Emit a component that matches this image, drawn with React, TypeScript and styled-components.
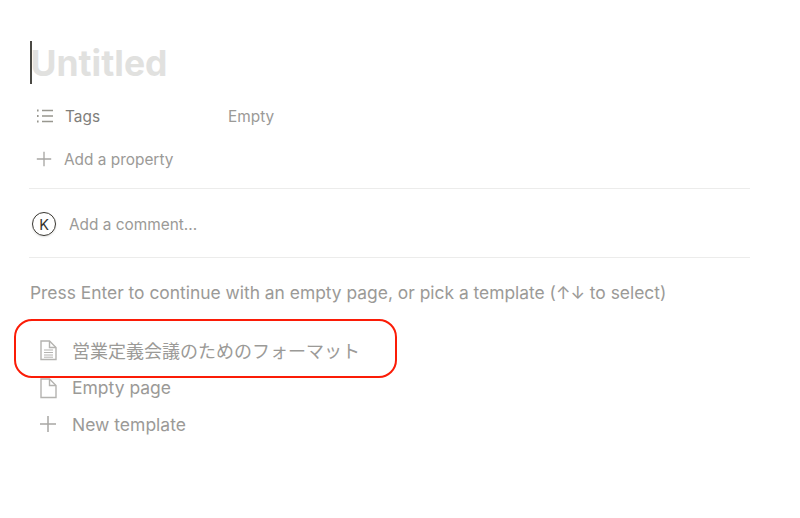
import React from 'react';
import styled, { createGlobalStyle } from 'styled-components';

const GlobalStyle = createGlobalStyle`
  html, body {
    margin: 0;
    padding: 0;
    background: #fff;
  }
  body {
    font-family: Inter, "Noto Sans CJK JP", sans-serif;
  }
`;

const Page = styled.div`
  width: 800px;
  height: 518px;
  overflow: hidden;
  padding: 40px 50px 0 29px;
  box-sizing: border-box;
`;

const TitleRow = styled.div`
  display: flex;
  align-items: center;
  height: 44px;
  padding-left: 1px;
`;

const Caret = styled.span`
  width: 1.5px;
  height: 43px;
  background: #4a4944;
`;

const Title = styled.h1`
  margin: 3px 0 0 -1px;
  font-size: 35.5px;
  font-weight: 700;
  line-height: 44px;
  letter-spacing: 0;
  color: #e1e1df;
`;

const PropertyRow = styled.div`
  display: flex;
  align-items: center;
  height: 24px;
  margin-top: ${p => p.$top}px;
  padding-left: 6px;
  font-size: 15.4px;
  color: ${p => p.$color};
`;

const PropertyName = styled.span`
  width: 163px;
  margin-left: 10px;
  color: #7f7e7a;
`;

const EmptyValue = styled.span`
  color: #9b9a97;
`;

const AddLabel = styled.span`
  margin-left: 11px;
`;

const Divider = styled.hr`
  margin: ${p => p.$top}px 0 0;
  border: 0;
  border-top: 1px solid #ececeb;
`;

const CommentRow = styled.div`
  display: flex;
  align-items: center;
  height: 24px;
  margin-top: 23px;
  padding-left: 3px;
  font-size: 15.4px;
  color: #9b9a97;
`;

const Avatar = styled.div`
  width: 24px;
  height: 24px;
  box-sizing: border-box;
  border: 1.3px solid #37352f;
  border-radius: 50%;
  display: flex;
  align-items: center;
  justify-content: center;
  font-size: 14.5px;
  color: #37352f;
  box-shadow: 0 1px 2px rgba(0, 0, 0, 0.12);
`;

const CommentLabel = styled.span`
  margin-left: 13px;
`;

const Hint = styled.p`
  margin: 23px 0 0 1px;
  font-size: 17.4px;
  line-height: 24px;
  color: #9b9a97;
`;

const TemplateList = styled.div`
  position: relative;
  margin-top: 26px;
  display: flex;
  flex-direction: column;
`;

const TemplateRow = styled.div`
  display: flex;
  align-items: center;
  height: ${p => p.$height}px;
  padding-left: 9px;
  font-size: 17.5px;
  color: #9b9a97;
`;

const TemplateLabel = styled.span`
  margin-left: 14px;
  font-size: ${p => p.$size || 17.5}px;
`;

const Highlight = styled.div`
  position: absolute;
  left: -15px;
  top: -12px;
  width: 383px;
  height: 59px;
  box-sizing: border-box;
  border: 2px solid #fb1c07;
  border-radius: 18px;
`;

const ListIcon = () => (
  <svg width="20" height="20" viewBox="0 0 20 20" fill="none" stroke="#98978f" strokeWidth="1.3">
    <path d="M7 4.5h11M7 10h11M7 15.5h11" />
    <path d="M2 4.5h1.6M2 10h1.6M2 15.5h1.6" strokeWidth="1.8" />
  </svg>
);

const PlusIcon = ({ size }: { size: number }) => (
  <svg width={size} height={size} viewBox="0 0 20 20" fill="none" stroke="#a8a7a4" strokeWidth="1.5">
    <path d="M10 2v16M2 10h16" />
  </svg>
);

const DocIcon = ({ lines }: { lines?: boolean }) => (
  <svg width="20" height="22" viewBox="0 0 20 22" fill="none" stroke="#b4b3b0" strokeWidth="1.4">
    <path d="M3 2h8.5L18 8.5V20.5H3z" />
    <path d="M11.5 2v6.5H18" />
    {lines && <path d="M6 11h9M6 13.5h9M6 16h9M6 18.2h9" strokeWidth="1" />}
  </svg>
);

const App = () => {
  return (
    <>
      <GlobalStyle />
      <Page>
        <TitleRow>
          <Caret />
          <Title>Untitled</Title>
        </TitleRow>
        <PropertyRow $top={20} $color="#74736f">
          <ListIcon />
          <PropertyName>Tags</PropertyName>
          <EmptyValue>Empty</EmptyValue>
        </PropertyRow>
        <PropertyRow $top={19} $color="#9b9a97">
          <PlusIcon size={18} />
          <AddLabel>Add a property</AddLabel>
        </PropertyRow>
        <Divider $top={17} />
        <CommentRow>
          <Avatar>K</Avatar>
          <CommentLabel>Add a comment...</CommentLabel>
        </CommentRow>
        <Divider $top={21} />
        <Hint>Press Enter to continue with an empty page, or pick a template (↑↓ to select)</Hint>
        <TemplateList>
          <Highlight />
          <TemplateRow $height={37}>
            <DocIcon lines />
            <TemplateLabel $size={18}>営業定義会議のためのフォーマット</TemplateLabel>
          </TemplateRow>
          <TemplateRow $height={39}>
            <DocIcon />
            <TemplateLabel>Empty page</TemplateLabel>
          </TemplateRow>
          <TemplateRow $height={34}>
            <PlusIcon size={20} />
            <TemplateLabel>New template</TemplateLabel>
          </TemplateRow>
        </TemplateList>
      </Page>
    </>
  );
};

export default App;
